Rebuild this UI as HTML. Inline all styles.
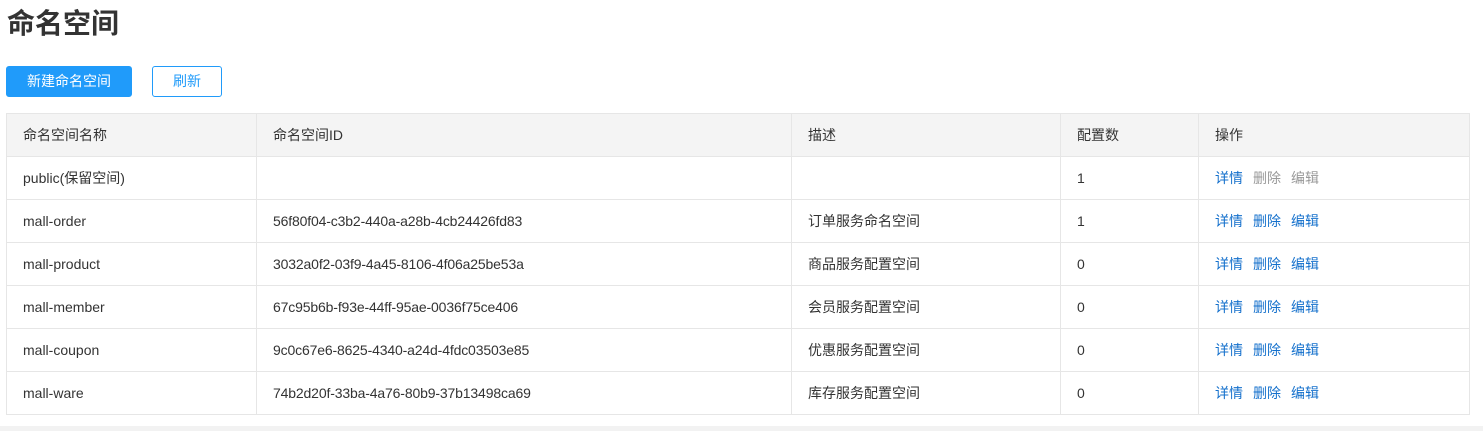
<!DOCTYPE html>
<html><head><meta charset="utf-8"><style>
*{margin:0;padding:0;box-sizing:border-box}
body{width:1483px;height:431px;background:#fff;font-family:"Liberation Sans","Noto Sans CJK SC",sans-serif;color:#333;position:relative;overflow:hidden}
h1{position:absolute;left:7px;top:4px;font-size:28px;font-weight:bold;color:#333;line-height:40px}
.btn{position:absolute;top:66px;height:31px;border-radius:3px;font-size:14px;line-height:29px;text-align:center}
.b1{left:6px;width:126px;background:#209bfa;color:#fff;border:1px solid #209bfa}
.b2{left:152px;width:70px;border:1px solid #209bfa;color:#209bfa;background:#fff}
table{position:absolute;left:6px;top:113px;width:1464px;border-collapse:collapse;font-size:14px}
td,th{border:1px solid #e6e6e6;height:43px;padding:0 0 0 16px;text-align:left;font-weight:normal;color:#333}
td.id{letter-spacing:-0.15px}
th{background:#f4f4f4}
a{color:#1470cc;text-decoration:none;margin-right:10px}
.g{color:#999}
.foot{position:absolute;left:0;top:426px;width:1483px;height:5px;background:#f2f2f2}
</style></head><body>
<h1>命名空间</h1>
<div class="btn b1">新建命名空间</div>
<div class="btn b2">刷新</div>
<table>
<tr><th style="width:250px">命名空间名称</th><th style="width:535px">命名空间ID</th><th style="width:269px">描述</th><th style="width:138px">配置数</th><th>操作</th></tr>
<tr><td>public(保留空间)</td><td class="id"></td><td></td><td>1</td><td><a>详情</a><a class="g">删除</a><a class="g">编辑</a></td></tr>
<tr><td>mall-order</td><td class="id">56f80f04-c3b2-440a-a28b-4cb24426fd83</td><td>订单服务命名空间</td><td>1</td><td><a>详情</a><a>删除</a><a>编辑</a></td></tr>
<tr><td>mall-product</td><td class="id">3032a0f2-03f9-4a45-8106-4f06a25be53a</td><td>商品服务配置空间</td><td>0</td><td><a>详情</a><a>删除</a><a>编辑</a></td></tr>
<tr><td>mall-member</td><td class="id">67c95b6b-f93e-44ff-95ae-0036f75ce406</td><td>会员服务配置空间</td><td>0</td><td><a>详情</a><a>删除</a><a>编辑</a></td></tr>
<tr><td>mall-coupon</td><td class="id">9c0c67e6-8625-4340-a24d-4fdc03503e85</td><td>优惠服务配置空间</td><td>0</td><td><a>详情</a><a>删除</a><a>编辑</a></td></tr>
<tr><td>mall-ware</td><td class="id">74b2d20f-33ba-4a76-80b9-37b13498ca69</td><td>库存服务配置空间</td><td>0</td><td><a>详情</a><a>删除</a><a>编辑</a></td></tr>
</table>
<div class="foot"></div>
</body></html>
